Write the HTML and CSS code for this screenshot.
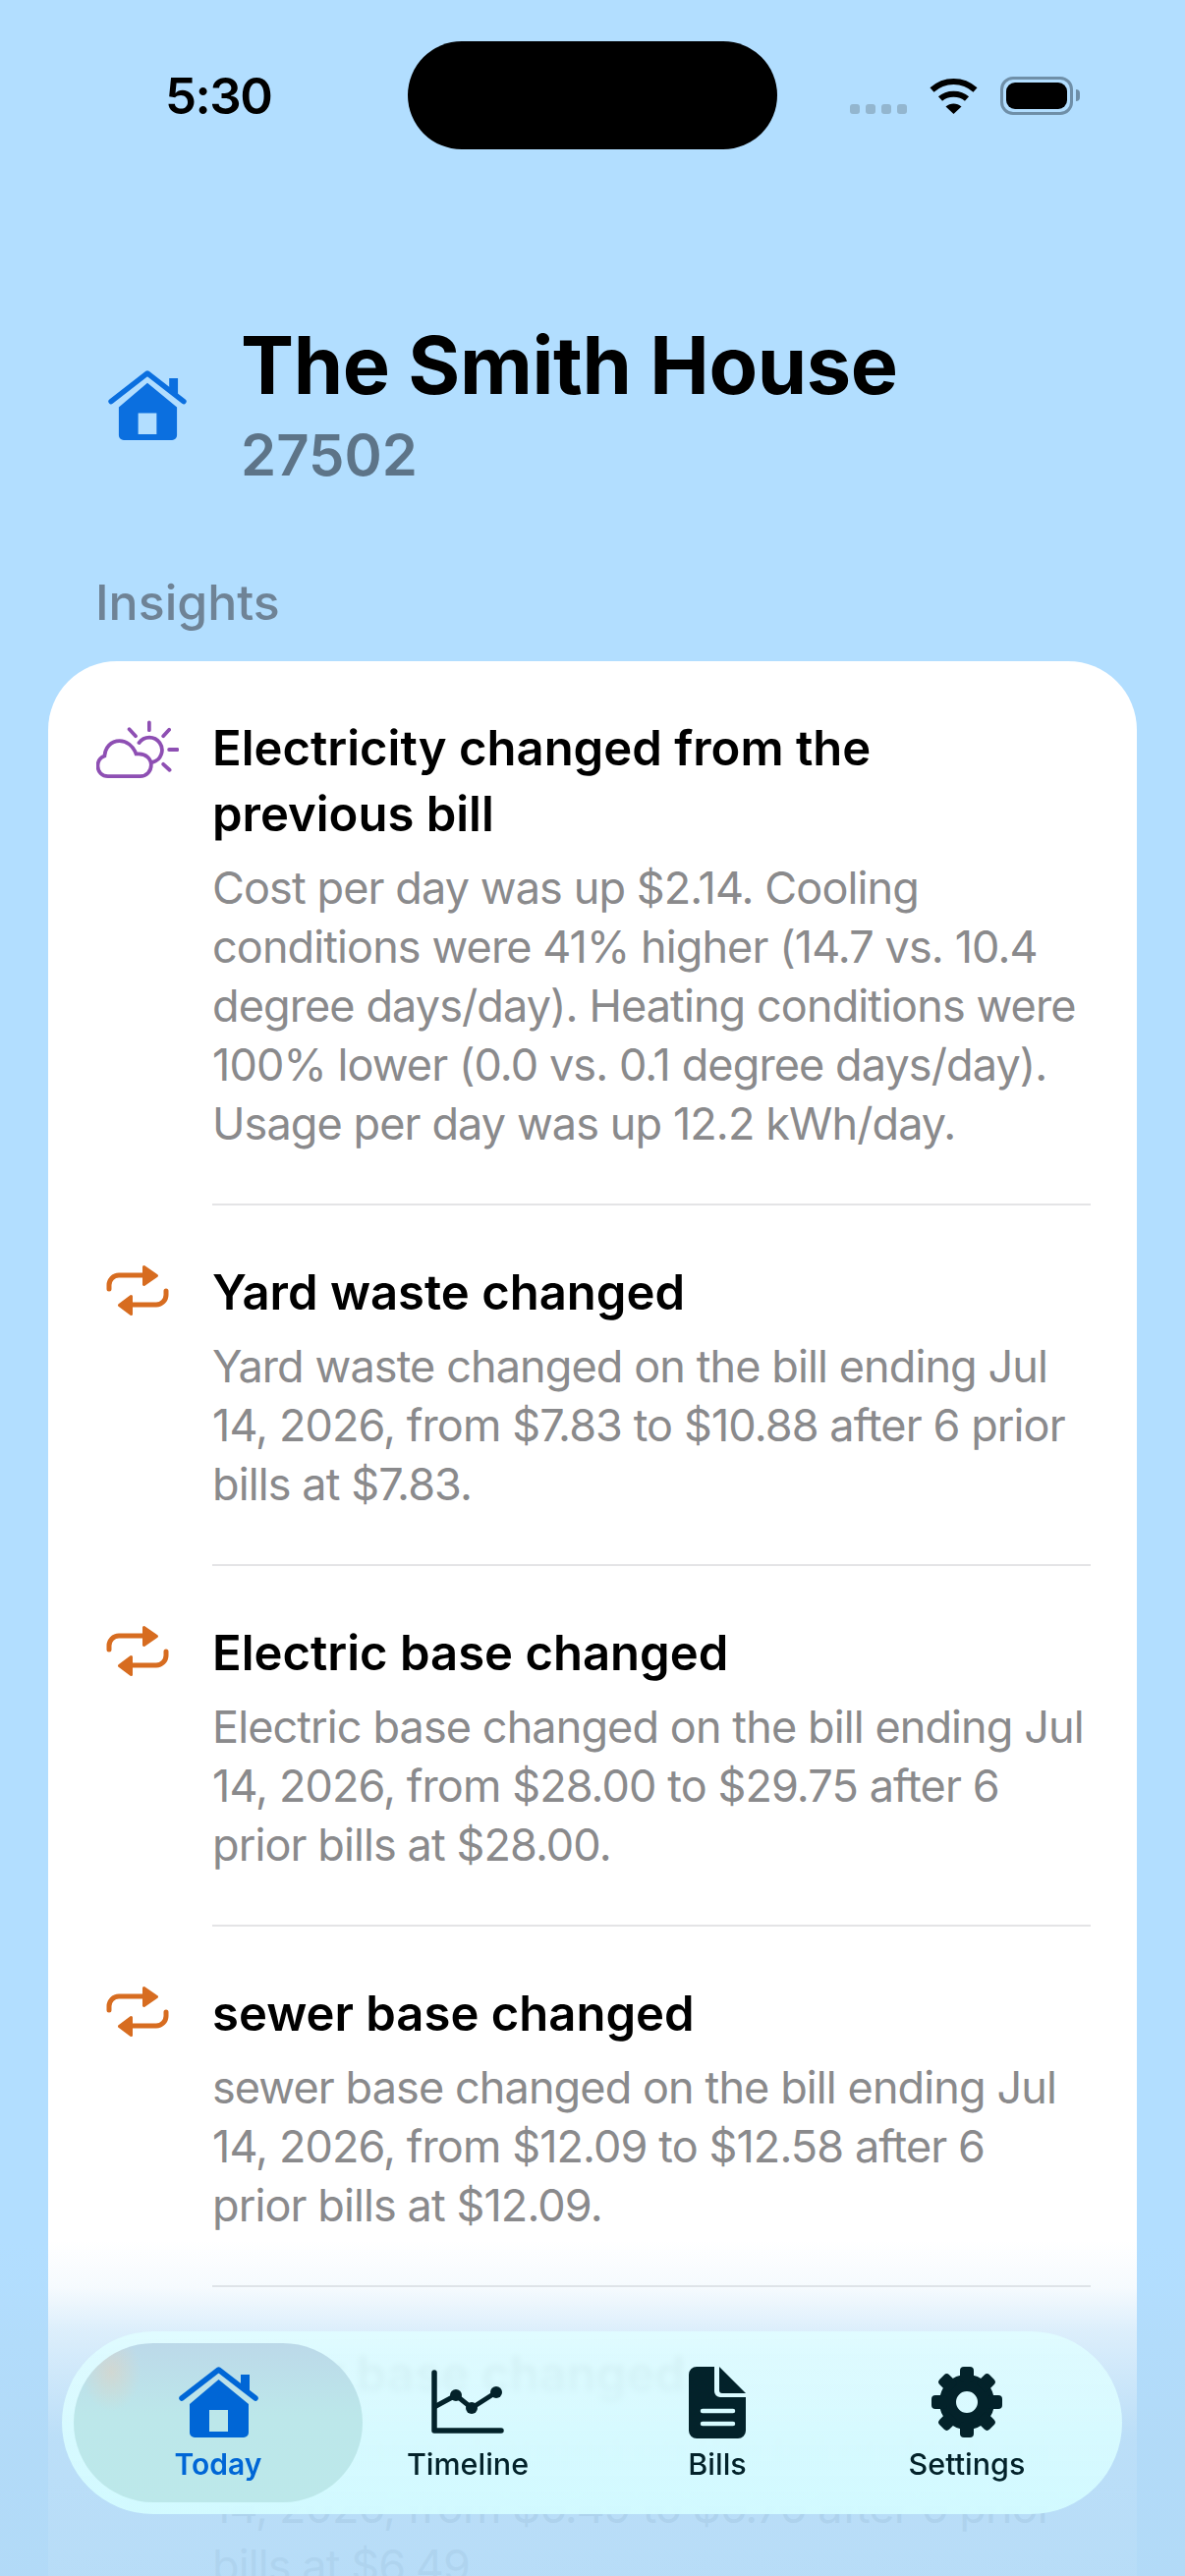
FILE: index.html

```html
<!DOCTYPE html>
<html lang="en">
<head>
  <meta charset="UTF-8" />
  <meta name="viewport" content="width=device-width, initial-scale=1.0"/>
  <title>The Smith House</title>
  <link rel="stylesheet" href="styles.css">
</head>
<body>
  <svg class="defs" width="0" height="0">
    <symbol id="house" viewBox="0 0 81 72">
      <path d="M3 32 40.500 3 78 32" fill="none" stroke="currentColor" stroke-width="5.500" stroke-linecap="round" stroke-linejoin="round"/>
      <path d="M63 8h9v18l-9-7z" fill="currentColor"/>
      <path fill-rule="evenodd" fill="currentColor" d="M40.500 13 71 38v29a5 5 0 0 1-5 5H16a5 5 0 0 1-5-5V38zM31 44v22h19V44z"/>
    </symbol>
    <symbol id="swap" viewBox="0 0 63 53">
      <path d="M2.500 25V21A10 10 0 0 1 12.500 11H40M60.500 27V31A10 10 0 0 1 50.500 41H23" fill="none" stroke="currentColor" stroke-width="5" stroke-linecap="round"/>
      <path d="M38 2.500 51 11.500 38 20.500zM25 32.500 13 41.500 25 50.500z" fill="currentColor" stroke="currentColor" stroke-width="3" stroke-linejoin="round"/>
    </symbol>
  </svg>

  <div class="app">
    <div class="status-bar">
      <div class="time">5:30</div>
      <div class="island"></div>
      <div class="status-right">
        <div class="signal"><span></span><span></span><span></span><span></span></div>
        <svg class="wifi" width="51" height="38" viewBox="0 0 51 38">
          <path d="M3.500 13.500C16 2 35 2 47.500 13.500" fill="none" stroke="#000" stroke-width="6"/>
          <path d="M12 22.500C19 16 32 16 39 22.500" fill="none" stroke="#000" stroke-width="6"/>
          <path d="M25.500 38 17.500 30.500C22 26.500 29 26.500 33.500 30.500z"/>
        </svg>
        <div class="battery"><div class="battery-fill"></div></div>
      </div>
    </div>

    <header class="header">
      <svg class="header-icon"><use href="#house"/></svg>
      <div>
        <h1>The Smith House</h1>
        <div class="zip">27502</div>
      </div>
    </header>

    <div class="section-label">Insights</div>

    <section class="card">
      <div class="row">
        <svg class="row-icon weather" viewBox="0 0 85 60">
          <g fill="none" stroke="currentColor" stroke-width="3.800" stroke-linecap="round">
            <path d="M12 57.500H45C52 57.500 56.500 52 56.500 46 56.500 39 51 34.500 44 34.500H41C38 26 31 21 24 21 15 21 9 28 8.500 36.500 4 38 1.500 42 1.500 47 1.500 53 6 57.500 12 57.500Z"/>
            <path d="M44 23A13 13 0 1 1 58 43"/>
            <path d="M54.500 2V10M34 9 40.500 16M75 9.500 69 16M75 30H83.500M69 45 75.500 51"/>
          </g>
        </svg>
        <div class="row-text">
          <h2>Electricity changed from the<br>previous bill</h2>
          <p>Cost per day was up $2.14. Cooling conditions were 41% higher (14.7 vs. 10.4 degree days/day). Heating conditions were 100% lower (0.0 vs. 0.1 degree days/day). Usage per day was up 12.2 kWh/day.</p>
        </div>
      </div>
      <div class="row">
        <svg class="row-icon change"><use href="#swap"/></svg>
        <div class="row-text">
          <h2>Yard waste changed</h2>
          <p>Yard waste changed on the bill ending Jul 14, 2026, from $7.83 to $10.88 after 6 prior bills at $7.83.</p>
        </div>
      </div>
      <div class="row">
        <svg class="row-icon change"><use href="#swap"/></svg>
        <div class="row-text">
          <h2>Electric base changed</h2>
          <p>Electric base changed on the bill ending Jul 14, 2026, from $28.00 to $29.75 after 6 prior bills at $28.00.</p>
        </div>
      </div>
      <div class="row">
        <svg class="row-icon change"><use href="#swap"/></svg>
        <div class="row-text">
          <h2>sewer base changed</h2>
          <p>sewer base changed on the bill ending Jul 14, 2026, from $12.09 to $12.58 after 6<br>prior bills at $12.09.</p>
        </div>
      </div>
      <div class="row">
        <svg class="row-icon change"><use href="#swap"/></svg>
        <div class="row-text">
          <h2>water base changed</h2>
          <p>water base changed on the bill ending Jul 14, 2026, from $6.49 to $6.76 after 6 prior bills at $6.49.</p>
        </div>
      </div>
    </section>

    <div class="fade"></div>

    <nav class="tabbar">
      <div class="tab active">
        <svg class="tab-icon house-icon"><use href="#house"/></svg>
        <span>Today</span>
      </div>
      <div class="tab">
        <svg class="tab-icon" width="74" height="72" viewBox="0 0 74 72">
          <path d="M3 6V65H71" fill="none" stroke="currentColor" stroke-width="5.500" stroke-linecap="round" stroke-linejoin="round"/>
          <path d="M3 41 25 29 41 42 66 26" fill="none" stroke="currentColor" stroke-width="5"/>
          <circle cx="25" cy="29" r="6"/><circle cx="41" cy="42" r="6"/><circle cx="66" cy="26" r="6"/>
        </svg>
        <span>Timeline</span>
      </div>
      <div class="tab">
        <svg class="tab-icon" width="58" height="73" viewBox="0 0 58 73">
          <path d="M8 0H26V25a6 6 0 0 0 6 6H58V65a8 8 0 0 1-8 8H8a8 8 0 0 1-8-8V8A8 8 0 0 1 8 0Z"/>
          <path d="M31 0 58 27H34a3 3 0 0 1-3-3Z"/>
          <path d="M14 45H45M14 58H45" fill="none" stroke="#d6fbff" stroke-width="4.500" stroke-linecap="round"/>
        </svg>
        <span>Bills</span>
      </div>
      <div class="tab">
        <svg class="tab-icon" width="72" height="72" viewBox="0 0 72 72">
          <circle cx="36" cy="36" r="19.500" fill="none" stroke="currentColor" stroke-width="17"/>
          <rect x="29" y="0" width="14" height="16" rx="4"/>
          <rect x="29" y="0" width="14" height="16" rx="4" transform="rotate(45 36 36)"/>
          <rect x="29" y="0" width="14" height="16" rx="4" transform="rotate(90 36 36)"/>
          <rect x="29" y="0" width="14" height="16" rx="4" transform="rotate(135 36 36)"/>
          <rect x="29" y="0" width="14" height="16" rx="4" transform="rotate(180 36 36)"/>
          <rect x="29" y="0" width="14" height="16" rx="4" transform="rotate(225 36 36)"/>
          <rect x="29" y="0" width="14" height="16" rx="4" transform="rotate(270 36 36)"/>
          <rect x="29" y="0" width="14" height="16" rx="4" transform="rotate(315 36 36)"/>
        </svg>
        <span>Settings</span>
      </div>
    </nav>
  </div>
</body>
</html>
```

FILE: styles.css

```css
html, body {
  margin: 0;
  padding: 0;
}

body {
  font-family: Inter, 'Noto Sans', sans-serif;
  background: #b2deff;
  color: #000;
}

.defs {
  position: absolute;
}

.app {
  position: relative;
  width: 1206px;
  height: 2622px;
  overflow: hidden;
}

/* status bar */
.status-bar {
  display: flex;
  align-items: center;
  padding-top: 42px;
  height: 110px;
}

.time {
  width: 247px;
  padding-left: 168px;
  font-size: 51px;
  font-weight: 600;
  letter-spacing: -1.5px;
}

.island {
  width: 376px;
  height: 110px;
  background: #000;
  border-radius: 55px;
}

.status-right {
  display: flex;
  align-items: center;
  gap: 22px;
  padding-left: 74px;
}

.signal {
  display: flex;
  gap: 6px;
  margin-top: 28px;
}

.signal span {
  width: 10px;
  height: 10px;
  border-radius: 3px;
  background: #93b6cf;
}

.battery {
  position: relative;
  width: 62px;
  height: 27px;
  padding: 3px;
  border: 3px solid #6f8fa8;
  border-radius: 13px;
}

.battery::after {
  content: "";
  position: absolute;
  right: -10px;
  top: 10px;
  width: 4px;
  height: 12px;
  border-radius: 0 4px 4px 0;
  background: #6f8fa8;
}

.battery-fill {
  height: 100%;
  background: #000;
  border-radius: 9px;
}

/* header */
.header {
  display: flex;
  align-items: center;
  gap: 55px;
  margin-top: 172px;
  padding-left: 110px;
}

.header-icon {
  width: 80px;
  height: 71px;
  margin-top: 1px;
  color: #0b6fdf;
}

h1 {
  margin: 0;
  font-size: 81px;
  line-height: 96px;
  font-weight: 700;
  letter-spacing: -0.4px;
}

.zip {
  margin-top: 7px;
  font-size: 58px;
  line-height: 72px;
  font-weight: 600;
  color: #5d7488;
}

.section-label {
  margin-top: 84px;
  padding-left: 97px;
  font-size: 50px;
  line-height: 60px;
  font-weight: 500;
  color: #6f8396;
}

/* insights card */
.card {
  margin: 30px 49px 0;
  background: #fff;
  border-radius: 70px;
  padding-left: 49px;
  padding-right: 47px;
}

.row {
  display: flex;
  gap: 34px;
}

.row-icon {
  flex: none;
  width: 84px;
  height: 60px;
  margin-top: 60px;
}

.weather {
  color: #8e4fb3;
}

.change {
  color: #d76c20;
  height: 53px;
}

.row-text {
  flex: 1;
  padding: 55px 0 51px;
  border-bottom: 2px solid #e4e4e6;
}

h2 {
  margin: 0 0 12px;
  font-size: 49px;
  line-height: 67px;
  font-weight: 600;
  letter-spacing: 0;
}

.row-text p {
  margin: 0;
  font-size: 45px;
  line-height: 60px;
  color: #8a8a8c;
  letter-spacing: -0.9px;
}

/* fade under the tab bar */
.fade {
  position: absolute;
  left: 0;
  right: 0;
  top: 2280px;
  bottom: 0;
  background: linear-gradient(rgba(178,218,247,0) 0%, rgba(178,218,247,0.12) 14%, rgba(178,218,247,0.45) 27%, rgba(178,218,247,0.88) 58%, rgba(178,218,247,0.93) 100%);
}

/* tab bar */
.tabbar {
  position: absolute;
  left: 63px;
  top: 2373px;
  width: 1079px;
  height: 186px;
  box-sizing: border-box;
  padding: 0 32px;
  display: grid;
  grid-template-columns: repeat(4, 254px);
  border-radius: 93px;
  background: linear-gradient(rgba(224,252,255,0.9), rgba(211,251,255,0.95));
  backdrop-filter: blur(3px);
  color: #03222a;
}

.tab {
  position: relative;
  display: flex;
  flex-direction: column;
  align-items: center;
  justify-content: flex-start;
  padding-top: 36px;
  font-size: 30.5px;
  line-height: 36px;
  font-weight: 500;
}

.tab span {
  position: absolute;
  top: 117px;
}

.tab-icon {
  position: relative;
  fill: currentColor;
}

.house-icon {
  width: 81px;
  height: 72px;
}

.tab.active {
  color: #0066d6;
}

.tab.active span {
  font-weight: 600;
  font-size: 30px;
}

.tab.active::before {
  content: "";
  position: absolute;
  left: -20px;
  right: -20px;
  top: 12px;
  height: 162px;
  border-radius: 81px;
  background: radial-gradient(ellipse 30px 40px at 13% 18%, rgba(240,205,175,0.4), rgba(240,205,175,0) 100%), linear-gradient(#bcd9e9, #bce7ea 45%, #bce8ea);
}
```
